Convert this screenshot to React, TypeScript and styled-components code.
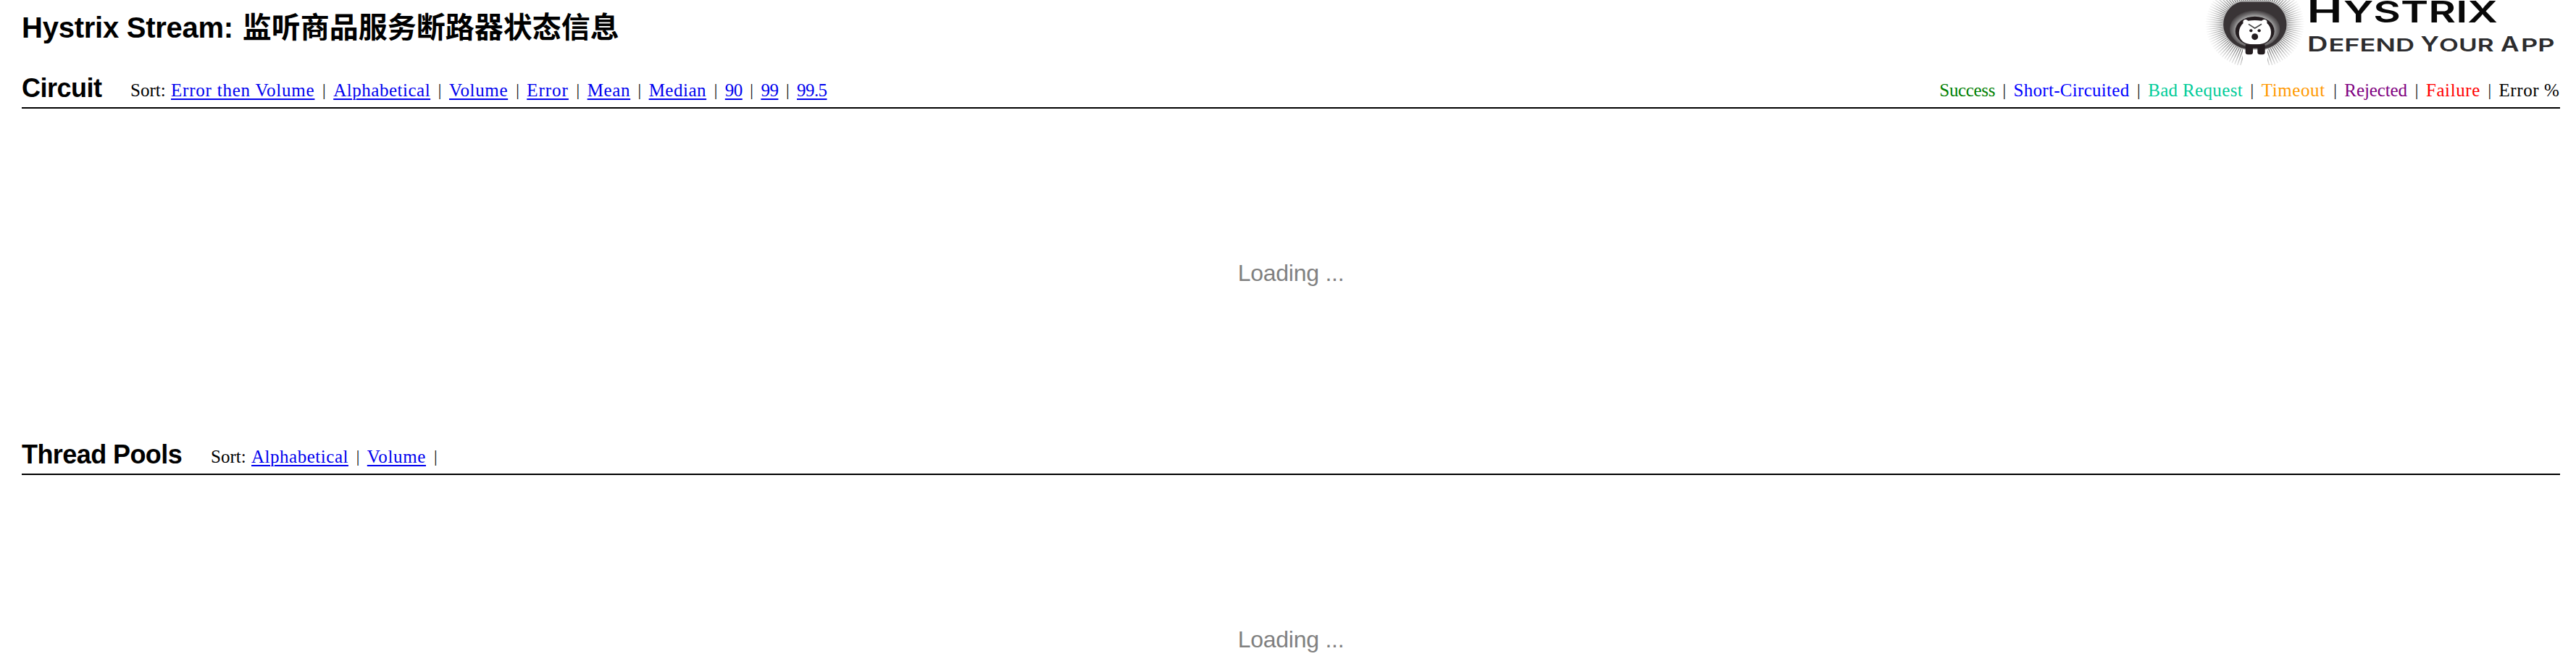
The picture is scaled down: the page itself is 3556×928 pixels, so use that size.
import React from "react";
import styled, { createGlobalStyle } from "styled-components";

const GlobalStyle = createGlobalStyle`
  body { margin: 0; background: #fff; color: #000; }
  * { box-sizing: border-box; }
`;

const Page = styled.main`
  width: 3556px;
  height: 928px;
  overflow: hidden;
  padding: 0 22px 0 30px;
  display: flex;
  flex-direction: column;
`;

const Header = styled.header`
  height: 90px;
  flex: none;
  display: flex;
  justify-content: space-between;
  align-items: flex-start;
`;

const Title = styled.h1`
  margin: 0;
  height: 76px;
  font: bold 40px/76px "Liberation Sans", "Noto Sans CJK SC", sans-serif;
  white-space: pre;
`;

const Latin = styled.span`
  letter-spacing: -0.25px;
  margin-right: 2px;
`;

const Logo = styled.svg`
  display: block;
  width: 494px;
  height: 90px;
`;

const Section = styled.section`
  height: 506px;
  flex: none;
`;

const Bar = styled.div`
  height: 60px;
  padding-top: 5px;
  display: flex;
  border-bottom: 2px solid #000;
`;

const Heading = styled.h2<{ $width: number; $spacing: number }>`
  margin: 0;
  width: ${(p) => p.$width}px;
  font: bold 36px/53px "Liberation Sans", sans-serif;
  letter-spacing: ${(p) => p.$spacing}px;
  white-space: nowrap;
`;

const Menu = styled.div`
  display: flex;
  padding-top: 6px;
  font: 25px/47px "Liberation Serif", serif;
  white-space: nowrap;
`;

const Legend = styled(Menu)`
  margin-left: auto;
`;

const Label = styled.span`
  width: 56px;
`;

const Separator = styled.span`
  width: 25.6px;
  text-align: center;
  font-size: 23px;
`;

const Cell = styled.span<{ $width: number; $spacing: number; $color?: string }>`
  width: ${(p) => p.$width}px;
  letter-spacing: ${(p) => p.$spacing}px;
  color: ${(p) => p.$color ?? "#000"};
`;

const SortLink = styled(Cell).attrs({ as: "a", href: "#" })`
  color: #0000ee;
  text-decoration: underline;
  text-decoration-thickness: 2px;
  text-underline-offset: 3px;
`;

const Loading = styled.div`
  padding-top: 207px;
  text-align: center;
  font: 32px/40px "Liberation Sans", sans-serif;
  letter-spacing: -0.25px;
  color: #808080;
`;

type Item = { text: string; width: number; spacing: number; color?: string };

const circuitSorts: Item[] = [
  { text: "Error then Volume", width: 198.6, spacing: 0.78 },
  { text: "Alphabetical", width: 134.2, spacing: 0.52 },
  { text: "Volume", width: 81.7, spacing: 0.65 },
  { text: "Error", width: 57.8, spacing: 0.98 },
  { text: "Mean", width: 59.4, spacing: 0.65 },
  { text: "Median", width: 79.6, spacing: 0.52 },
  { text: "90", width: 24, spacing: -0.5 },
  { text: "99", width: 24, spacing: -0.5 },
  { text: "99.5", width: 41.5, spacing: -0.56 },
];

const poolSorts: Item[] = [circuitSorts[1], circuitSorts[2]];

const legend: Item[] = [
  { text: "Success", width: 76.6, spacing: -0.35, color: "green" },
  { text: "Short-Circuited", width: 160, spacing: 0.3, color: "blue" },
  { text: "Bad Request", width: 131, spacing: 0.35, color: "#00cc99" },
  { text: "Timeout", width: 89, spacing: 0.6, color: "#ff9900" },
  { text: "Rejected", width: 87, spacing: -0.1, color: "purple" },
  { text: "Failure", width: 75, spacing: 0.6, color: "red" },
  { text: "Error %", width: 84.5, spacing: 0.6 },
];

const SortMenu = ({ items, trailing }: { items: Item[]; trailing?: boolean }) => (
  <Menu>
    <Label>Sort:</Label>
    {items.map((it, i) => (
      <React.Fragment key={it.text}>
        {i > 0 && <Separator>|</Separator>}
        <SortLink $width={it.width} $spacing={it.spacing}>{it.text}</SortLink>
      </React.Fragment>
    ))}
    {trailing && <Separator>|</Separator>}
  </Menu>
);

const rays = Array.from({ length: 104 }, (_, i) => {
  const a = (i * Math.PI * 2) / 104;
  return `M${218 + Math.cos(a) * 110} ${100 + Math.sin(a) * 80}L${218 + Math.cos(a) * 204} ${100 + Math.sin(a) * 182}`;
}).join("");

type GlyphRun = { text: string; x: number; w: number; size: number };

const nameRuns: GlyphRun[] = [
  { text: "H", x: 144.5, w: 49, size: 43 },
  { text: "YSTRIX", x: 195, w: 213, size: 41 },
];

const sloganRuns: GlyphRun[] = [
  { text: "D", x: 145, w: 28.5, size: 28 },
  { text: "EFEND", x: 174.5, w: 118.5, size: 24.5 },
  { text: "Y", x: 301.5, w: 25.5, size: 28 },
  { text: "OUR", x: 327, w: 75.5, size: 24.5 },
  { text: "A", x: 412, w: 25.5, size: 28 },
  { text: "PP", x: 440, w: 46.5, size: 24.5 },
];

const Runs = ({ runs, y }: { runs: GlyphRun[]; y: number }) => (
  <>
    {runs.map((r) => (
      <text key={r.text} x={r.x} y={y} fontSize={r.size} textLength={r.w} lengthAdjust="spacingAndGlyphs">
        {r.text}
      </text>
    ))}
  </>
);

const HystrixLogo = () => (
  <Logo viewBox="0 0 494 90">
    <defs>
      <radialGradient id="fade" gradientUnits="userSpaceOnUse" cx="218" cy="100" r="204">
        <stop offset="0.5" stopColor="#333" stopOpacity="0.85" />
        <stop offset="0.72" stopColor="#444" stopOpacity="0.5" />
        <stop offset="1" stopColor="#777" stopOpacity="0.03" />
      </radialGradient>
      <radialGradient id="halo" gradientUnits="userSpaceOnUse" cx="0" cy="0" r="1" gradientTransform="translate(218 125) scale(112 84)">
        <stop offset="0.68" stopColor="#aaa" />
        <stop offset="0.8" stopColor="#777576" />
        <stop offset="1" stopColor="#393436" />
      </radialGradient>
    </defs>
    <g transform="scale(0.33333)">
      <path d={rays} stroke="url(#fade)" strokeWidth="4" fill="none" />
      <path d="M168 204H270V270H168Z" fill="#fff" />
      <path d="M160 5H278C324 15 352 57 352 103C352 152 308 196 262 204H176C128 196 85 152 85 103C85 57 114 15 160 5Z" fill="#393436" stroke="#b5b5b5" strokeWidth="5" />
      <ellipse cx="218" cy="120" rx="104" ry="77" fill="url(#halo)" />
      <ellipse cx="218" cy="129" rx="81" ry="61" fill="#231c1f" />
      <path d="M170 96C166 82 180 76 190 86Q218 82 246 86C256 76 272 82 268 96C290 115 290 150 272 169C254 190 182 190 165 169C146 150 149 115 170 96Z" fill="#fff" />
      <path d="M192 100L218 117L246 100" fill="none" stroke="#444" strokeWidth="5" />
      <circle cx="202" cy="127" r="6.5" fill="#231c1f" />
      <circle cx="236" cy="127" r="6.5" fill="#231c1f" />
      <circle cx="218" cy="152" r="13.5" fill="#231c1f" />
      <path d="M179 184H260V217Q260 226 250 226H239Q229 226 229 217V198H210V217Q210 226 200 226H189Q179 226 179 217Z" fill="#231c1f" />
    </g>
    <g fontFamily='Inter, "Open Sans", sans-serif' fontWeight="600" fill="#080808">
      <Runs runs={nameRuns} y={31} />
    </g>
    <g fontFamily='Inter, "Open Sans", sans-serif' fontWeight="600" fill="#2c2c2e">
      <Runs runs={sloganRuns} y={71} />
    </g>
  </Logo>
);

export default function App() {
  return (
    <Page>
      <GlobalStyle />
      <Header>
        <Title><Latin>Hystrix Stream: </Latin>监听商品服务断路器状态信息</Title>
        <HystrixLogo />
      </Header>
      <Section>
        <Bar>
          <Heading $width={150} $spacing={-0.5}>Circuit</Heading>
          <SortMenu items={circuitSorts} />
          <Legend>
            {legend.map((it, i) => (
              <React.Fragment key={it.text}>
                {i > 0 && <Separator>|</Separator>}
                <Cell $width={it.width} $spacing={it.spacing} $color={it.color}>{it.text}</Cell>
              </React.Fragment>
            ))}
          </Legend>
        </Bar>
        <Loading>Loading ...</Loading>
      </Section>
      <Section>
        <Bar>
          <Heading $width={261} $spacing={-0.58}>Thread Pools</Heading>
          <SortMenu items={poolSorts} trailing />
        </Bar>
        <Loading>Loading ...</Loading>
      </Section>
    </Page>
  );
}
